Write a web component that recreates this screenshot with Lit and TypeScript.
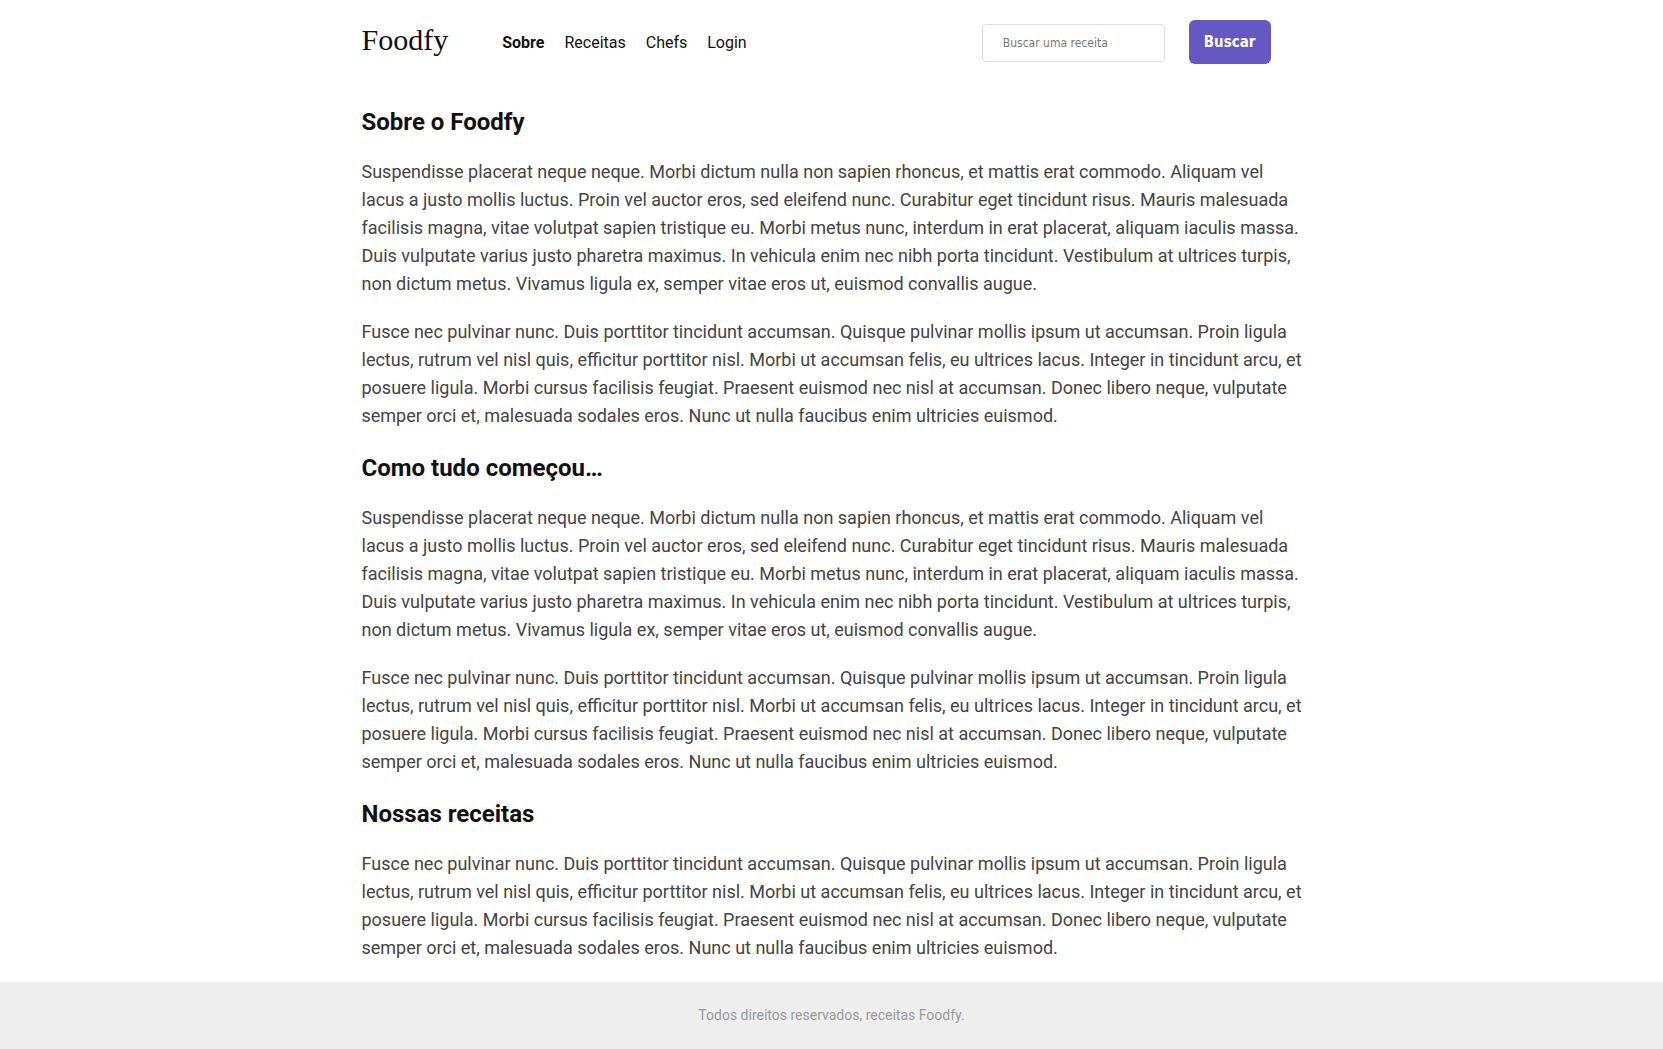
import { LitElement, html, css } from "lit";
import { customElement } from "lit/decorators.js";
import { classMap } from "lit/directives/class-map.js";

interface Section {
  title: string;
  paragraphs: string[];
}

const SUSPENDISSE =
  "Suspendisse placerat neque neque. Morbi dictum nulla non sapien rhoncus, et mattis erat commodo. Aliquam vel lacus a justo mollis luctus. Proin vel auctor eros, sed eleifend nunc. Curabitur eget tincidunt risus. Mauris malesuada facilisis magna, vitae volutpat sapien tristique eu. Morbi metus nunc, interdum in erat placerat, aliquam iaculis massa. Duis vulputate varius justo pharetra maximus. In vehicula enim nec nibh porta tincidunt. Vestibulum at ultrices turpis, non dictum metus. Vivamus ligula ex, semper vitae eros ut, euismod convallis augue.";

const FUSCE =
  "Fusce nec pulvinar nunc. Duis porttitor tincidunt accumsan. Quisque pulvinar mollis ipsum ut accumsan. Proin ligula lectus, rutrum vel nisl quis, efficitur porttitor nisl. Morbi ut accumsan felis, eu ultrices lacus. Integer in tincidunt arcu, et posuere ligula. Morbi cursus facilisis feugiat. Praesent euismod nec nisl at accumsan. Donec libero neque, vulputate semper orci et, malesuada sodales eros. Nunc ut nulla faucibus enim ultricies euismod.";

const SECTIONS: Section[] = [
  { title: "Sobre o Foodfy", paragraphs: [SUSPENDISSE, FUSCE] },
  { title: "Como tudo começou…", paragraphs: [SUSPENDISSE, FUSCE] },
  { title: "Nossas receitas", paragraphs: [FUSCE] },
];

const LINKS = ["Sobre", "Receitas", "Chefs", "Login"];

@customElement("site-header")
export class SiteHeader extends LitElement {
  static styles = css`
    :host {
      display: block;
    }
    .bar {
      box-sizing: border-box;
      max-width: 940px;
      min-height: 84px;
      margin: 0 auto;
      padding-right: 31px;
      display: flex;
      flex-wrap: wrap;
      align-items: center;
    }
    .logo {
      margin-right: 54px;
      padding-bottom: 4px;
      color: #111;
      font: 400 30px/36px "Liberation Serif", serif;
      text-decoration: none;
    }
    .nav {
      display: flex;
      gap: 20px;
      margin-top: 2px;
    }
    .link {
      color: #111;
      font-size: 16px;
      line-height: 20px;
      text-decoration: none;
    }
    .active {
      font-weight: 700;
    }
    .search {
      display: flex;
      align-items: center;
      gap: 24px;
      margin-left: auto;
    }
    .field {
      box-sizing: border-box;
      width: 183px;
      height: 38px;
      margin: 2px 0 0;
      padding: 0 20px;
      border: 1px solid #ddd;
      border-radius: 4px;
      background: #fff;
      color: #111;
      font: 12px "DejaVu Sans Condensed", "DejaVu Sans", sans-serif;
    }
    .field::placeholder {
      color: #777;
    }
    .submit {
      height: 44px;
      padding: 0 15px;
      border: 0;
      border-radius: 6px;
      background: #6558c3;
      color: #fff;
      font: 700 15px "DejaVu Sans Condensed", "DejaVu Sans", sans-serif;
      cursor: pointer;
    }
  `;

  render() {
    return html`
      <header class="bar">
        <a class="logo" href="#">Foodfy</a>
        <nav class="nav">
          ${LINKS.map(
            (label, i) =>
              html`<a class=${classMap({ link: true, active: i === 0 })} href="#">${label}</a>`
          )}
        </nav>
        <form class="search">
          <input class="field" type="search" aria-label="Buscar uma receita" placeholder="Buscar uma receita" />
          <button class="submit" type="submit">Buscar</button>
        </form>
      </header>
    `;
  }
}

@customElement("app-root")
export class AppRoot extends LitElement {
  static styles = css`
    :host {
      display: flex;
      flex-direction: column;
      min-height: 100vh;
      background: #fff;
      color: #111;
      font-family: Roboto, sans-serif;
    }
    .content {
      box-sizing: border-box;
      width: 100%;
      max-width: 940px;
      margin: 0 auto;
      padding-top: 20px;
    }
    .title {
      margin: 0 0 18px;
      font-size: 24px;
      line-height: 36px;
      font-weight: 700;
    }
    .text {
      margin: 0 -4px 20px 0;
      color: #444;
      font-size: 18px;
      line-height: 28px;
    }
    .footer {
      margin-top: auto;
      padding: 23px 0 24px;
      background: #eee;
      color: #999;
      font-size: 14px;
      line-height: 20px;
      text-align: center;
    }
  `;

  render() {
    return html`
      <site-header></site-header>
      <main class="content">
        ${SECTIONS.map(
          (section) => html`
            <section>
              <h2 class="title">${section.title}</h2>
              ${section.paragraphs.map((text) => html`<p class="text">${text}</p>`)}
            </section>
          `
        )}
      </main>
      <footer class="footer">Todos direitos reservados, receitas Foodfy.</footer>
    `;
  }
}
